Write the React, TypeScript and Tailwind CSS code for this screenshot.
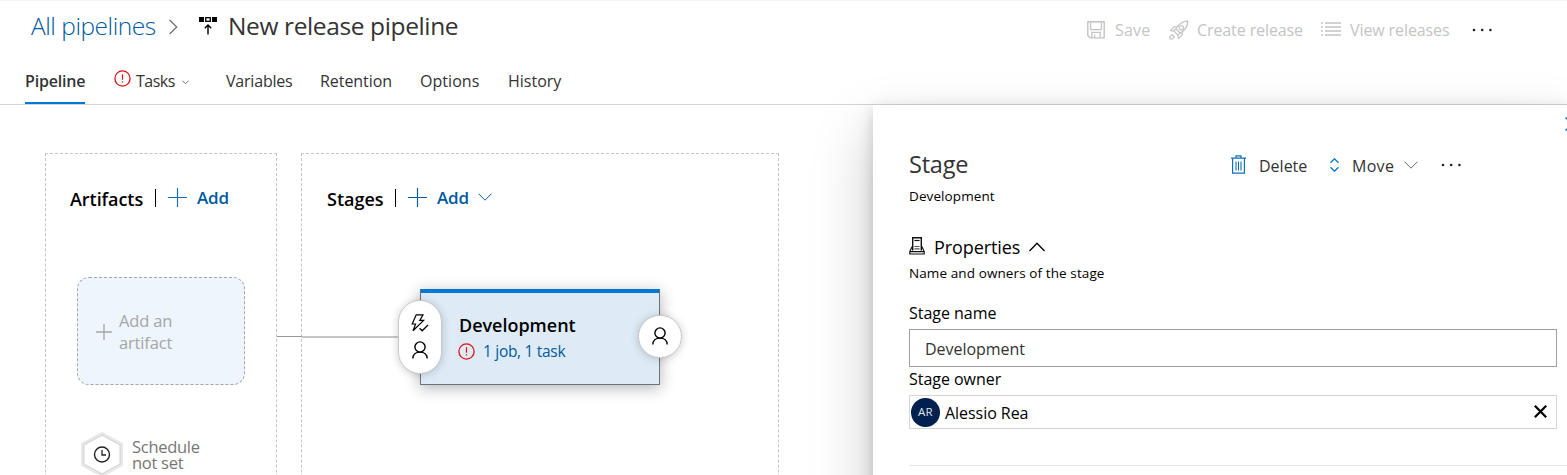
import type { ReactNode } from "react";

type IconProps = { className?: string };

function Icon({ w, h, className = "", children }: IconProps & { w: number; h: number; children: ReactNode }) {
  return (
    <svg width={w} height={h} viewBox={`0 0 ${w} ${h}`} fill="none" stroke="currentColor" className={"block shrink-0 " + className}>
      {children}
    </svg>
  );
}

const Alert = ({ className }: IconProps) => (
  <Icon w={17} h={17} className={"text-[#dc1414] " + className}>
    <circle cx="8.5" cy="8.5" r="7.6" strokeWidth="1.3" />
    <path d="M8.5 4.2V9.8M8.5 11.2V12.6" strokeWidth="1.2" />
  </Icon>
);

const Plus = ({ className }: IconProps) => (
  <Icon w={19} h={19} className={className}>
    <path d="M9.5 0V19M0 9.5H19" strokeWidth="1.15" />
  </Icon>
);

const Chevron = ({ className }: IconProps) => (
  <Icon w={14} h={8} className={className}>
    <path d="M0.5 0.7L7 7.2L13.5 0.7" strokeWidth="1" />
  </Icon>
);

const Person = ({ className }: IconProps) => (
  <Icon w={16} h={18} className={className}>
    <circle cx="8" cy="6" r="5.1" strokeWidth="1.4" />
    <path d="M0.8 17.6C0.9 13.6 3.8 11.1 8 11.1C12.2 11.1 15.1 13.6 15.2 17.6" strokeWidth="1.4" />
  </Icon>
);

const LightningCheck = ({ className }: IconProps) => (
  <Icon w={18} h={18} className={className}>
    <path d="M5.2 0.8H12L8.8 6.4H12.6L2 16.8L4.6 10H1.2L5.2 0.8Z" strokeWidth="1.2" />
    <path d="M8.6 14.2L11.2 16.8L17 11" strokeWidth="1.3" />
  </Icon>
);

const Dots = ({ className }: IconProps) => (
  <Icon w={21} h={4} className={className}>
    <g fill="currentColor" stroke="none">
      <circle cx="2" cy="2" r="1.3" />
      <circle cx="10.2" cy="2" r="1.3" />
      <circle cx="18.4" cy="2" r="1.3" />
    </g>
  </Icon>
);

const ReleasePipeline = ({ className }: IconProps) => (
  <Icon w={18} h={18} className={className}>
    <g fill="currentColor" stroke="none">
      <rect x="0" y="0" width="5" height="5" />
      <rect x="13" y="0" width="5" height="5" />
    </g>
    <rect x="6.7" y="0.7" width="4.6" height="3.6" strokeWidth="1.3" />
    <path d="M9 17.5V8.4M5.8 11.2L9 8L12.2 11.2" strokeWidth="1.4" />
  </Icon>
);

const SaveIcon = () => (
  <Icon w={18} h={18}>
    <path d="M0.8 0.8H17.2V16.9H3.2L0.8 14.6V0.8Z" strokeWidth="1.4" />
    <path d="M3.6 1V8.6H14.4V1M4.8 16.8V11.4H13.2V16.8M7.6 13.4V16.8" strokeWidth="1.3" />
  </Icon>
);

const Rocket = () => (
  <Icon w={20} h={20}>
    <path d="M18.8 1.2C14.3 0.9 10.6 2.9 6.2 9.4L5 11.2L8.8 15L10.6 13.8C17.1 9.4 19.1 5.7 18.8 1.2Z" strokeWidth="1.3" />
    <circle cx="12.3" cy="7.7" r="2.2" strokeWidth="1.2" />
    <path d="M8.4 6.5L4.9 6.9L1.6 10.6L5 11.2M13.5 11.6L13.1 15.1L9.4 18.4L8.8 15M7 9L11 13M1 19V16.8L3 14.6L5.4 17L3.2 19H1Z" strokeWidth="1.2" />
  </Icon>
);

const ListIcon = () => (
  <Icon w={20} h={14} className="mb-[2px]">
    <path d="M0 1H2M0 5H2M0 9H2M0 13H2M4 1H20M4 5H20M4 9H20M4 13H20" strokeWidth="1.3" />
  </Icon>
);

const Trash = () => (
  <Icon w={15} h={19} className="text-[#106ebe]">
    <path d="M0 3.2H15M5 3V0.8H10V3M1.6 3.2V18.2H13.4V3.2" strokeWidth="1.2" />
    <path d="M5 6.5V15.5M7.5 6.5V15.5M10 6.5V15.5" strokeWidth="1.1" />
  </Icon>
);

const MoveIcon = () => (
  <Icon w={9} h={14} className="ml-px mt-[2px] text-[#0078d4]">
    <path d="M0.5 4.8L4.5 0.8L8.5 4.8M0.5 9.2L4.5 13.2L8.5 9.2" strokeWidth="1.3" />
  </Icon>
);

const PropertiesIcon = () => (
  <Icon w={16} h={18} className="mb-[3px] text-[#111]">
    <path d="M3.7 13.6V0.7H12.3V13.6" strokeWidth="1.4" />
    <path d="M3.2 9.6L0.8 14.6V17H15.2V14.6L12.8 9.6M0.8 14.7H15.2" strokeWidth="1.2" />
    <path d="M5.4 3.5H10.6" strokeWidth="1.2" />
    <path d="M5.4 9.5H10.6M5.4 11.9H10.6" stroke="#555" strokeWidth="1.2" />
  </Icon>
);

const Clock = () => (
  <Icon w={42} h={45}>
    <path d="M21 1.5L40.5 12.2V32.8L21 43.5L1.5 32.8V12.2Z" fill="white" stroke="#e8e8e8" strokeWidth="3" />
    <path d="M21 3.2L39 13V32L21 41.8L3 32V13Z" stroke="#c8c8c8" strokeWidth="0.8" />
    <circle cx="21" cy="22.5" r="7.5" stroke="#222" strokeWidth="1.4" />
    <path d="M21 18V23H25" stroke="#222" strokeWidth="1.3" />
  </Icon>
);

function Header() {
  return (
    <header className="flex h-[105px] shrink-0 flex-col border-b border-[#d6d6d6] text-[#333]">
      <div className="flex h-[66px] items-start border-t border-[#f6f6f6]">
        <a className="ml-[31px] mt-[9px] w-[138px] text-[24.5px] font-light leading-[32px] tracking-[-0.47px] text-[#005a9e]">All pipelines</a>
        <svg width="9" height="16" viewBox="0 0 9 16" fill="none" className="mt-[18px] text-[#666]">
          <path d="M0.6 1L7.8 8L0.6 15" stroke="currentColor" strokeWidth="1.1" />
        </svg>
        <ReleasePipeline className="ml-[21px] mt-[16px] text-black" />
        <h1 className="ml-[11px] mt-[9px] w-[859px] text-[24.5px] leading-[32px] tracking-[-0.38px]">New release pipeline</h1>
        <div className="flex h-[40px] items-center pt-[17px] text-[16px] leading-[24px] text-[#c4c4c4]">
          <SaveIcon />
          <span className="ml-[10px] w-[54px] tracking-[0.2px]">Save</span>
          <Rocket />
          <span className="ml-[8px] w-[124px] whitespace-nowrap tracking-[-0.1px]">Create release</span>
          <ListIcon />
          <span className="ml-[9px] w-[122px] whitespace-nowrap tracking-[-0.1px]">View releases</span>
          <Dots className="text-[#222]" />
        </div>
      </div>
      <nav className="flex h-[38px] items-stretch text-[16px] leading-[30px]">
        <span className="ml-[25px] w-[60px] whitespace-nowrap border-b-2 border-[#0078d4] font-semibold tracking-[-0.2px]">Pipeline</span>
        <Alert className="ml-[29px] mt-[4px]" />
        <span className="ml-[5px] w-[46px] tracking-[-0.5px]">Tasks</span>
        <svg width="7" height="5" viewBox="0 0 7 5" fill="none" className="mt-[14px] text-[#777]">
          <path d="M0.4 0.6L3.5 3.8L6.6 0.6" stroke="currentColor" />
        </svg>
        <span className="ml-[37px] w-[94px] tracking-[-0.2px]">Variables</span>
        <span className="w-[100px] tracking-[-0.05px]">Retention</span>
        <span className="w-[88px] tracking-[0.05px]">Options</span>
        <span className="tracking-[0px]">History</span>
      </nav>
    </header>
  );
}

function Artifacts() {
  return (
    <section className="h-[400px] w-[232px] border border-dashed border-[#c4c4c4]">
      <div className="ml-[24px] mt-[30px] flex h-[30px] items-start text-[18px] font-semibold leading-[30px] text-black">
        <h2 className="w-[85px] tracking-[-0.05px]">Artifacts</h2>
        <span className="mt-[5px] h-[18px] w-px bg-black" />
        <Plus className="ml-[12px] mt-[4px] text-[#106ebe]" />
        <span className="ml-[10px] text-[17px] leading-[27px] tracking-[-0.15px] text-[#005a9e]">Add</span>
      </div>
      <div className="ml-[31px] mt-[63px] flex h-[108px] w-[168px] items-center rounded-[12px] border border-dashed border-[#a6a6a6] bg-[#eef5fc] pl-[18px] pt-[2px] text-[#a6a6a6]">
        <Icon w={16} h={16}>
          <path d="M8 0V16M0 8H16" strokeWidth="1.3" />
        </Icon>
        <span className="ml-[7px] w-[60px] text-[16.5px] leading-[22px] tracking-[-0.15px]">Add an artifact</span>
      </div>
      <div className="ml-[35px] mt-[47px] flex items-center">
        <Clock />
        <span className="ml-[9px] w-[76px] text-[16.5px] leading-[16px] tracking-[-0.28px] text-[#767676]">Schedule not set</span>
      </div>
    </section>
  );
}

function Stages() {
  return (
    <section className="h-[400px] w-[478px] border border-dashed border-[#c4c4c4]">
      <div className="ml-[25px] mt-[30px] flex h-[30px] items-start text-[18px] font-semibold leading-[30px] text-black">
        <h2 className="w-[68px] tracking-[0px]">Stages</h2>
        <span className="mt-[5px] h-[18px] w-px bg-black" />
        <Plus className="ml-[12px] mt-[4px] text-[#005a9e]" />
        <span className="ml-[10px] w-[41px] text-[17px] leading-[27px] tracking-[-0.15px] text-[#005a9e]">Add</span>
        <Chevron className="mt-[9px] text-[#005a9e]" />
      </div>
    </section>
  );
}

function StageNode() {
  return (
    <>
      <div className="absolute left-[277px] top-[231px] h-px w-[25px] bg-[#999]" />
      <div className="absolute left-[302px] top-[231px] h-[2px] w-[97px] bg-[#c8c8c8]" />
      <div className="absolute left-[420px] top-[184px] h-[96px] w-[240px] border border-t-4 border-[#69747e] border-t-[#0078d4] bg-[#deebf7] pl-[37px] pt-[20px] shadow-[0_3px_14px_rgba(0,0,0,0.3)]">
        <div className="pl-px text-[18px] font-semibold leading-[24px] tracking-[-0.02px] text-black">Development</div>
        <div className="mt-[2px] flex items-center text-[15.5px] leading-[24px] tracking-[-0.3px] text-[#005a9e]">
          <Alert />
          <span className="ml-[8px]">1 job, 1 task</span>
        </div>
      </div>
      <div className="absolute left-[398px] top-[195px] flex h-[74px] w-[44px] flex-col items-center rounded-full border border-[#c8c8c8] bg-white pt-[13px] text-black shadow-[0_1px_8px_rgba(0,0,0,0.2)]">
        <LightningCheck />
        <Person className="mt-[9px]" />
      </div>
      <div className="absolute left-[638px] top-[210px] flex h-[43px] w-[44px] items-center justify-center rounded-full border border-[#c8c8c8] bg-white text-black shadow-[0_1px_8px_rgba(0,0,0,0.2)]">
        <Person className="mb-[2px]" />
      </div>
    </>
  );
}

function StagePanel() {
  return (
    <aside className="relative flex h-[420px] w-[694px] shrink-0 flex-col bg-white pl-[36px] text-black shadow-[0_25.6px_57.6px_rgba(0,0,0,0.22),0_4.8px_14.4px_rgba(0,0,0,0.18)]">
      <svg width="14" height="14" viewBox="0 0 14 14" fill="none" className="absolute right-[-12px] top-[12px] text-[#106ebe]">
        <path d="M0.5 0.5L13.5 13.5M13.5 0.5L0.5 13.5" stroke="currentColor" strokeWidth="1.4" />
      </svg>
      <div className="mt-[44px] flex h-[30px] items-center text-[16px] leading-[30px] text-[#333]">
        <h2 className="w-[322px] text-[23.5px] tracking-[-0.2px]">Stage</h2>
        <Trash />
        <span className="ml-[13px] w-[70px] pt-[3px] tracking-[0px]">Delete</span>
        <MoveIcon />
        <span className="ml-[13px] w-[52px] pt-[3px] tracking-[0.3px]">Move</span>
        <Chevron className="mt-px text-[#666]" />
        <Dots className="ml-[23px] mt-[2px] text-[#222]" />
      </div>
      <div className="mt-[7px] text-[13.5px] leading-[20px] tracking-[0.1px]">Development</div>
      <div className="mt-[26px] flex h-[30px] items-center">
        <PropertiesIcon />
        <span className="ml-[9px] w-[95px] text-[18px] leading-[30px] tracking-[-0.1px]">Properties</span>
        <svg width="16" height="10" viewBox="0 0 16 10" fill="none">
          <path d="M0.5 9L8 1.2L15.5 9" stroke="currentColor" strokeWidth="1.3" />
        </svg>
      </div>
      <div className="mt-px text-[13.5px] leading-[20px] tracking-[0.1px]">Name and owners of the stage</div>
      <label className="mt-[18px] text-[16px] leading-[24px] tracking-[-0.03px]">Stage name</label>
      <div className="mt-[4px] h-[38px] w-[648px] border border-[#a0a0a0] pl-[15px] text-[16px] leading-[38px] tracking-[-0.04px] text-[#333]">Development</div>
      <label className="text-[16px] leading-[24px] tracking-[-0.03px]">Stage owner</label>
      <div className="mt-[4px] flex h-[34px] w-[648px] items-center border border-[#d6d6d6] pl-px pr-[9px]">
        <span className="flex h-[29px] w-[29px] items-center justify-center rounded-full bg-[#002050] text-[11.5px] tracking-[0.4px] text-[#dfe4ec]">AR</span>
        <span className="ml-[5px] flex-1 pt-[2px] text-[16px] leading-[30px] tracking-[-0.05px]">Alessio Rea</span>
        <svg width="13" height="13" viewBox="0 0 13 13" fill="none" className="mb-[2px]">
          <path d="M0.8 0.8L12.2 12.2M12.2 0.8L0.8 12.2" stroke="currentColor" strokeWidth="2.2" />
        </svg>
      </div>
      <div className="mt-[36px] h-px w-[658px] shrink-0 bg-[#e6e6e6]" />
    </aside>
  );
}

export default function App() {
  return (
    <div className="flex h-[475px] w-[1567px] flex-col overflow-hidden bg-white font-['Open_Sans','Noto_Sans',sans-serif]">
      <Header />
      <main className="flex h-[370px] shrink-0">
        <div className="relative flex h-[370px] w-[873px] shrink-0 gap-[24px] pl-[45px] pt-[48px]">
          <Artifacts />
          <Stages />
          <StageNode />
        </div>
        <StagePanel />
      </main>
    </div>
  );
}
